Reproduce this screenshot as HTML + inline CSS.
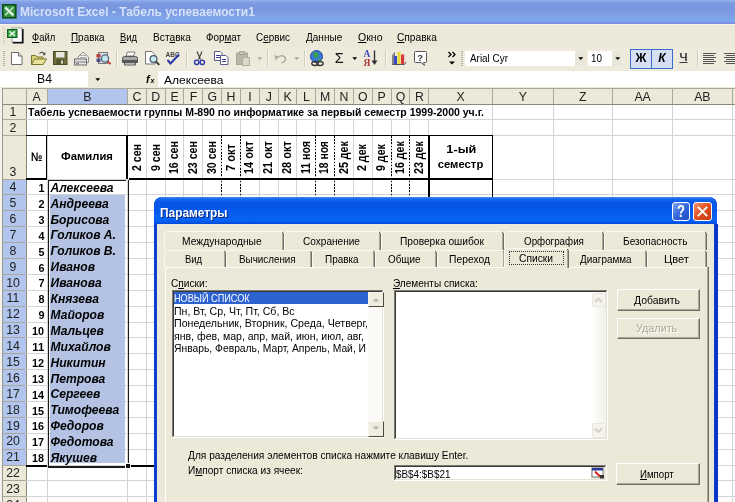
<!DOCTYPE html>
<html><head><meta charset="utf-8"><title>Excel</title><style>html,body{margin:0;padding:0;background:#fff;}
body{width:735px;height:502px;position:relative;overflow:hidden;font-family:"Liberation Sans",sans-serif;}
#r{position:absolute;left:0;top:0;width:735px;height:502px;overflow:hidden;will-change:transform;filter:blur(0.35px);}
#r div,#r span,#r svg{position:absolute;display:block;}
#r span{white-space:nowrap;}
#r u{text-decoration:underline;}
</style></head><body><div id="r">
<div style="left:0.00px;top:0.00px;width:735.00px;height:24.00px;background:linear-gradient(#9bb8f0 0,#85a4e8 6%,#7a97df 18%,#7a98e0 45%,#7fa3e8 70%,#80a8ec 88%,#7a90e6 96%,#7b8fe0 100%);"></div>
<svg style="left:2px;top:4px" width="14.5" height="14.5" viewBox="0 0 16 16"><rect x="0.8" y="0.8" width="14.400" height="14.400" fill="#3a9447" stroke="#0b4f18" stroke-width="1.800"/><path d="M3.500 3.800L12.500 12.500" stroke="#e4f4e4" stroke-width="2.600"/><path d="M12.500 3.500L3.500 12.500" stroke="#cfeacf" stroke-width="1.500"/></svg>
<span style="left:20.20px;top:4.78px;font-size:12.6px;line-height:15.12px;font-weight:bold;font-style:normal;color:#d6e1fa;transform:scaleX(0.9509);transform-origin:0 50%;">Microsoft Excel - Табель успеваемости1</span>
<div style="left:0.00px;top:24.00px;width:735.00px;height:23.00px;background:#ece9d8;"></div>
<div style="left:0.00px;top:24.00px;width:735.00px;height:1.00px;background:#f6f5ec;"></div>
<div style="left:2.50px;top:28.00px;width:2.00px;height:1.00px;background:#cfccba;"></div>
<div style="left:2.50px;top:30.00px;width:2.00px;height:1.00px;background:#cfccba;"></div>
<div style="left:2.50px;top:32.00px;width:2.00px;height:1.00px;background:#cfccba;"></div>
<div style="left:2.50px;top:34.00px;width:2.00px;height:1.00px;background:#cfccba;"></div>
<div style="left:2.50px;top:36.00px;width:2.00px;height:1.00px;background:#cfccba;"></div>
<div style="left:2.50px;top:38.00px;width:2.00px;height:1.00px;background:#cfccba;"></div>
<div style="left:2.50px;top:40.00px;width:2.00px;height:1.00px;background:#cfccba;"></div>
<div style="left:2.50px;top:42.00px;width:2.00px;height:1.00px;background:#cfccba;"></div>
<svg style="left:6px;top:27px" width="19" height="17" viewBox="0 0 19 17"><rect x="6" y="1" width="10" height="14" fill="#fff" stroke="#8a8a8a" stroke-width="0.800"/><path d="M16.800 2v13.800h-10" stroke="#111" stroke-width="1.600" fill="none"/><rect x="1.500" y="2.500" width="9.500" height="8" fill="#35a045" stroke="#14601e"/><path d="M3.500 4.300l5.500 4.500M9 4.300l-5.500 4.500" stroke="#e2f6e2" stroke-width="1.500"/></svg>
<span style="left:31.70px;top:30.50px;font-size:10.7px;line-height:12.84px;font-weight:normal;font-style:normal;color:#000;transform:scaleX(0.8857);transform-origin:0 50%;"><u>Ф</u>айл</span>
<span style="left:71.00px;top:30.50px;font-size:10.7px;line-height:12.84px;font-weight:normal;font-style:normal;color:#000;transform:scaleX(0.9268);transform-origin:0 50%;"><u>П</u>равка</span>
<span style="left:120.00px;top:30.50px;font-size:10.7px;line-height:12.84px;font-weight:normal;font-style:normal;color:#000;transform:scaleX(0.8782);transform-origin:0 50%;"><u>В</u>ид</span>
<span style="left:152.50px;top:30.50px;font-size:10.7px;line-height:12.84px;font-weight:normal;font-style:normal;color:#000;transform:scaleX(0.9555);transform-origin:0 50%;">Вст<u>а</u>вка</span>
<span style="left:206.00px;top:30.50px;font-size:10.7px;line-height:12.84px;font-weight:normal;font-style:normal;color:#000;transform:scaleX(0.9208);transform-origin:0 50%;">Фор<u>м</u>ат</span>
<span style="left:256.00px;top:30.50px;font-size:10.7px;line-height:12.84px;font-weight:normal;font-style:normal;color:#000;transform:scaleX(0.9279);transform-origin:0 50%;">С<u>е</u>рвис</span>
<span style="left:305.75px;top:30.50px;font-size:10.7px;line-height:12.84px;font-weight:normal;font-style:normal;color:#000;transform:scaleX(0.9377);transform-origin:0 50%;"><u>Д</u>анные</span>
<span style="left:357.50px;top:30.50px;font-size:10.7px;line-height:12.84px;font-weight:normal;font-style:normal;color:#000;transform:scaleX(0.9854);transform-origin:0 50%;"><u>О</u>кно</span>
<span style="left:397.00px;top:30.50px;font-size:10.7px;line-height:12.84px;font-weight:normal;font-style:normal;color:#000;transform:scaleX(0.9530);transform-origin:0 50%;"><u>С</u>правка</span>
<div style="left:0.00px;top:47.00px;width:735.00px;height:23.00px;background:#eeebdc;"></div>
<div style="left:3.00px;top:51.00px;width:2.00px;height:1.00px;background:#b5b2a0;"></div>
<div style="left:3.00px;top:53.00px;width:2.00px;height:1.00px;background:#b5b2a0;"></div>
<div style="left:3.00px;top:55.00px;width:2.00px;height:1.00px;background:#b5b2a0;"></div>
<div style="left:3.00px;top:57.00px;width:2.00px;height:1.00px;background:#b5b2a0;"></div>
<div style="left:3.00px;top:59.00px;width:2.00px;height:1.00px;background:#b5b2a0;"></div>
<div style="left:3.00px;top:61.00px;width:2.00px;height:1.00px;background:#b5b2a0;"></div>
<div style="left:3.00px;top:63.00px;width:2.00px;height:1.00px;background:#b5b2a0;"></div>
<div style="left:3.00px;top:65.00px;width:2.00px;height:1.00px;background:#b5b2a0;"></div>
<div style="left:461.00px;top:51.00px;width:2.00px;height:1.00px;background:#b5b2a0;"></div>
<div style="left:461.00px;top:53.00px;width:2.00px;height:1.00px;background:#b5b2a0;"></div>
<div style="left:461.00px;top:55.00px;width:2.00px;height:1.00px;background:#b5b2a0;"></div>
<div style="left:461.00px;top:57.00px;width:2.00px;height:1.00px;background:#b5b2a0;"></div>
<div style="left:461.00px;top:59.00px;width:2.00px;height:1.00px;background:#b5b2a0;"></div>
<div style="left:461.00px;top:61.00px;width:2.00px;height:1.00px;background:#b5b2a0;"></div>
<div style="left:461.00px;top:63.00px;width:2.00px;height:1.00px;background:#b5b2a0;"></div>
<div style="left:461.00px;top:65.00px;width:2.00px;height:1.00px;background:#b5b2a0;"></div>
<div style="left:186.00px;top:50.00px;width:1.00px;height:17.00px;background:#d0cdbc;"></div>
<div style="left:187.00px;top:50.00px;width:1.00px;height:17.00px;background:#f9f8f2;"></div>
<div style="left:267.00px;top:50.00px;width:1.00px;height:17.00px;background:#d0cdbc;"></div>
<div style="left:268.00px;top:50.00px;width:1.00px;height:17.00px;background:#f9f8f2;"></div>
<div style="left:304.00px;top:50.00px;width:1.00px;height:17.00px;background:#d0cdbc;"></div>
<div style="left:305.00px;top:50.00px;width:1.00px;height:17.00px;background:#f9f8f2;"></div>
<div style="left:384.50px;top:50.00px;width:1.00px;height:17.00px;background:#d0cdbc;"></div>
<div style="left:385.50px;top:50.00px;width:1.00px;height:17.00px;background:#f9f8f2;"></div>
<div style="left:696.70px;top:50.00px;width:1.00px;height:17.00px;background:#d0cdbc;"></div>
<div style="left:697.70px;top:50.00px;width:1.00px;height:17.00px;background:#f9f8f2;"></div>
<div style="left:116.00px;top:50.00px;width:1.00px;height:17.00px;background:#d0cdbc;"></div>
<div style="left:117.00px;top:50.00px;width:1.00px;height:17.00px;background:#f9f8f2;"></div>
<svg style="left:10px;top:51px" width="14" height="15" viewBox="0 0 14 15"><path d="M1.5 1.5h7l3.5 3.5v8.5h-10.5z" fill="#fff" stroke="#6a6a6a"/><path d="M8.5 1.5v3.5h3.5" fill="#e8e8e8" stroke="#6a6a6a"/></svg>
<svg style="left:30px;top:50px" width="18" height="16" viewBox="0 0 18 16"><path d="M1.5 14.5v-9h4l1.5 1.5h6v7.5z" fill="#d9d27a" stroke="#77742c"/><path d="M1.5 14.5l3-5.5h12l-3.5 5.5z" fill="#e9e29a" stroke="#77742c"/><path d="M9.5 3.5c2-2 4.5-1.5 5 1" fill="none" stroke="#555" stroke-width="1.2"/><path d="M15.8 2.5l-1 3.2-2.4-1.6z" fill="#555"/></svg>
<svg style="left:53px;top:51px" width="15" height="15" viewBox="0 0 15 15"><rect x="0.5" y="0.5" width="13.5" height="13" fill="#6e6e3e" stroke="#4a4a22"/><rect x="3" y="1" width="8.5" height="5.5" fill="#e8e8e0"/><rect x="3.5" y="8.5" width="7.5" height="5" fill="#55552c"/><rect x="8" y="9.5" width="2" height="3.2" fill="#d8d8c8"/></svg>
<svg style="left:73px;top:50px" width="17" height="17" viewBox="0 0 17 17"><path d="M5 7l5-5 5.5 5v5.5h-10.5z" fill="#f4f4f4" stroke="#8a8a8a"/><path d="M7 5.5h6.5M7 7.5h6.5" stroke="#aaa"/><rect x="1.5" y="9" width="12" height="6" fill="#e4e4e4" stroke="#6a6a6a"/><path d="M1.5 12h12" stroke="#7a7a7a"/><rect x="3" y="13" width="3" height="1.5" fill="#888"/></svg>
<svg style="left:95px;top:50px" width="17" height="17" viewBox="0 0 17 17"><rect x="3.5" y="2.5" width="9" height="11" fill="#dcdce8" stroke="#777"/><rect x="1.500" y="4" width="4" height="3.500" fill="#b04040"/><rect x="1.5" y="8.5" width="4" height="3.5" fill="#505088"/><circle cx="10" cy="8.5" r="3.6" fill="#bfe6ee" stroke="#5a6a7a" stroke-width="1.3"/><path d="M12.600 11.2l3 3" stroke="#c03030" stroke-width="1.8"/></svg>
<svg style="left:121px;top:50px" width="18" height="17" viewBox="0 0 18 17"><path d="M5 6l1.500-4h7.500l-1.5 4z" fill="#fff" stroke="#777"/><path d="M1.500 8.500q0-2 2-2h11q2 0 2 2v4h-15z" fill="#a8a8a8" stroke="#555"/><rect x="1.5" y="10" width="15" height="2.8" fill="#555"/><path d="M3.500 12.800h11v2.200h-11z" fill="#e0e0e0" stroke="#555"/></svg>
<svg style="left:144px;top:50px" width="17" height="17" viewBox="0 0 17 17"><path d="M1.500 1.500h6.500l3 3v9.500h-9.500z" fill="#fff" stroke="#777"/><circle cx="9.5" cy="9" r="3.400" fill="#c6ecf2" stroke="#4a5a6a" stroke-width="1.3"/><path d="M12 11.600l3.300 3.300" stroke="#333" stroke-width="1.8"/></svg>
<svg style="left:164px;top:50px" width="18" height="17" viewBox="0 0 18 17"><text x="1.500" y="6.5" font-family="Liberation Sans" font-size="6.5" font-weight="bold" fill="#444">ABC</text><path d="M3.5 10l3 3.500l8.500-9" fill="none" stroke="#2a36a8" stroke-width="2"/></svg>
<svg style="left:193px;top:50px" width="13" height="17" viewBox="0 0 13 17"><path d="M4 1.500l3.500 8M9 1.500l-3.500 8" stroke="#444" stroke-width="1.200" fill="none"/><circle cx="3.700" cy="12.300" r="2.200" fill="none" stroke="#2a36a8" stroke-width="1.400"/><circle cx="9.300" cy="12.300" r="2.200" fill="none" stroke="#2a36a8" stroke-width="1.400"/></svg>
<svg style="left:213px;top:50px" width="17" height="17" viewBox="0 0 17 17"><path d="M1.500 1.500h5.500l2 2v7h-7.500z" fill="#fff" stroke="#5a5a8a"/><path d="M3 5.500h4M3 7.500h4" stroke="#3a3a9a"/><path d="M7.500 5.500h5.500l2 2v7h-7.500z" fill="#fff" stroke="#5a5a8a"/><path d="M9 9.500h4M9 11.500h4" stroke="#3a3a9a"/></svg>
<svg style="left:235px;top:50px" width="17" height="17" viewBox="0 0 17 17"><rect x="1.500" y="3" width="11" height="11.500" fill="#b9b7a6" stroke="#a9a796"/><rect x="4.500" y="1.500" width="5" height="3" fill="#c9c7b8" stroke="#a9a796"/><rect x="7.500" y="7.500" width="7" height="8" fill="#dcdacb" stroke="#b0ae9e"/></svg>
<svg style="left:256.5px;top:57.3px" width="5.5" height="3.5" viewBox="0 0 5.5 3.5"><path d="M0.300 0.3h4.900l-2.450 2.800z" fill="#aaa898"/></svg>
<svg style="left:274px;top:53.5px" width="13" height="10" viewBox="0 0 13 10"><path d="M3 4C6 0.500 11 1.200 11.500 4.800C11.700 7 10 8.500 7.500 8.600" fill="none" stroke="#b0ae9e" stroke-width="1.600"/><path d="M0.300 1.200l5 1-3.800 4.300z" fill="#b0ae9e"/></svg>
<svg style="left:293.5px;top:57.3px" width="5.5" height="3.5" viewBox="0 0 5.5 3.5"><path d="M0.300 0.3h4.900l-2.450 2.800z" fill="#aaa898"/></svg>
<svg style="left:309px;top:49px" width="17" height="18" viewBox="0 0 17 18"><circle cx="7.500" cy="7.500" r="6" fill="#3a78d8" stroke="#224a9a"/><path d="M4 4q3-2 5 0.500t-1 4-3-1.500z" fill="#3aa04a"/><path d="M9 9.500q3-0.500 3 1.500l-2 1.500z" fill="#3aa04a"/><ellipse cx="6" cy="14.500" rx="3.200" ry="2" fill="none" stroke="#333" stroke-width="1.300"/><ellipse cx="11" cy="14.500" rx="3.200" ry="2" fill="none" stroke="#333" stroke-width="1.300"/></svg>
<span style="left:334.80px;top:50.27px;font-size:14.5px;line-height:17.40px;font-weight:normal;font-style:normal;color:#111;font-family:"Liberation Serif",serif;">Σ</span>
<svg style="left:352.0px;top:57.3px" width="5.5" height="3.5" viewBox="0 0 5.5 3.5"><path d="M0.300 0.3h4.900l-2.450 2.800z" fill="#000"/></svg>
<svg style="left:363px;top:49px" width="17" height="18" viewBox="0 0 17 18"><text x="0.500" y="8" font-family="Liberation Serif" font-size="9.500" font-weight="bold" fill="#3a46b8">A</text><text x="0.5" y="16.500" font-family="Liberation Serif" font-size="9.500" font-weight="bold" fill="#a83a3a">Я</text><path d="M11.500 1.500v12" stroke="#333" stroke-width="1.400"/><path d="M8.500 11.500h6l-3 4.500z" fill="#333"/></svg>
<svg style="left:390px;top:49px" width="17" height="18" viewBox="0 0 17 18"><path d="M2.500 15.500v-9l2-3v9z" fill="#888" stroke="#555" stroke-width="0.600"/><path d="M2.500 15.500h12l1.500-2.500" fill="none" stroke="#555"/><rect x="4" y="7" width="3" height="8" fill="#3848c8"/><rect x="7.500" y="3" width="3" height="12" fill="#e8d838"/><rect x="11" y="5.500" width="3.200" height="9.500" fill="#d83a3a"/></svg>
<svg style="left:413px;top:50px" width="15" height="17" viewBox="0 0 15 17"><path d="M2.500 1.500h10q1 0 1 1v9q0 1-1 1h-2l1 3-3.500-3h-5.500q-1 0-1-1v-9q0-1 1-1z" fill="#fff" stroke="#555"/><text x="4.300" y="10.500" font-family="Liberation Sans" font-size="9.500" font-weight="bold" fill="#333">?</text></svg>
<svg style="left:447px;top:51px" width="10" height="15" viewBox="0 0 10 15"><path d="M1.500 1l2.500 2.500-2.500 2.500M5.500 1l2.500 2.500-2.500 2.500" fill="none" stroke="#000" stroke-width="1.300"/><path d="M2 10.500h6l-3 3z" fill="#000"/></svg>
<div style="left:465.00px;top:50.50px;width:110.00px;height:15.50px;background:#fff;"></div>
<span style="left:470.00px;top:52.20px;font-size:10.7px;line-height:12.84px;font-weight:normal;font-style:normal;color:#000;transform:scaleX(0.9264);transform-origin:0 50%;">Arial Cyr</span>
<div style="left:575.00px;top:50.50px;width:10.00px;height:15.50px;background:#e8e6d8;"></div>
<svg style="left:577.5px;top:57.3px" width="5.5" height="3.5" viewBox="0 0 5.5 3.5"><path d="M0.300 0.3h4.900l-2.450 2.800z" fill="#000"/></svg>
<div style="left:588.00px;top:50.50px;width:24.00px;height:15.50px;background:#fff;"></div>
<span style="left:591.00px;top:52.20px;font-size:10.7px;line-height:12.84px;font-weight:normal;font-style:normal;color:#000;transform:scaleX(0.9242);transform-origin:0 50%;">10</span>
<div style="left:612.00px;top:50.50px;width:9.00px;height:15.50px;background:#e8e6d8;"></div>
<svg style="left:615.0px;top:57.3px" width="5.5" height="3.5" viewBox="0 0 5.5 3.5"><path d="M0.300 0.3h4.900l-2.450 2.800z" fill="#000"/></svg>
<div style="left:630.00px;top:48.50px;width:22.00px;height:20.00px;background:#d6dff3;border:1px solid #3a6ccb;box-sizing:border-box;"></div>
<div style="left:651.00px;top:48.50px;width:22.00px;height:20.00px;background:#d6dff3;border:1px solid #3a6ccb;box-sizing:border-box;"></div>
<span style="left:635.58px;top:51.44px;font-size:12px;line-height:14.40px;font-weight:bold;font-style:normal;color:#000;">Ж</span>
<span style="left:658.31px;top:51.44px;font-size:12px;line-height:14.40px;font-weight:bold;font-style:italic;color:#000;">К</span>
<span style="left:679.46px;top:51.43px;font-size:11.5px;line-height:13.80px;font-weight:bold;font-style:normal;color:#3a3a3a;text-decoration:underline;">Ч</span>
<div style="left:703.00px;top:53.00px;width:12.80px;height:1.20px;background:#555;"></div>
<div style="left:703.00px;top:55.05px;width:10.50px;height:1.20px;background:#555;"></div>
<div style="left:703.00px;top:57.10px;width:12.80px;height:1.20px;background:#555;"></div>
<div style="left:703.00px;top:59.15px;width:10.50px;height:1.20px;background:#555;"></div>
<div style="left:703.00px;top:61.20px;width:12.80px;height:1.20px;background:#555;"></div>
<div style="left:703.00px;top:63.25px;width:10.50px;height:1.20px;background:#555;"></div>
<div style="left:724.00px;top:53.00px;width:12.80px;height:1.20px;background:#555;"></div>
<div style="left:725.50px;top:55.05px;width:9.80px;height:1.20px;background:#555;"></div>
<div style="left:724.00px;top:57.10px;width:12.80px;height:1.20px;background:#555;"></div>
<div style="left:725.50px;top:59.15px;width:9.80px;height:1.20px;background:#555;"></div>
<div style="left:724.00px;top:61.20px;width:12.80px;height:1.20px;background:#555;"></div>
<div style="left:725.50px;top:63.25px;width:9.80px;height:1.20px;background:#555;"></div>
<div style="left:0.00px;top:70.00px;width:735.00px;height:17.50px;background:#ece9d8;"></div>
<div style="left:0.00px;top:71.00px;width:88.00px;height:16.00px;background:#fff;"></div>
<span style="left:37.04px;top:72.32px;font-size:12.2px;line-height:14.64px;font-weight:normal;font-style:normal;color:#000;">B4</span>
<svg style="left:94.5px;top:78.3px" width="5.5" height="3.5" viewBox="0 0 5.5 3.5"><path d="M0.300 0.3h4.900l-2.450 2.800z" fill="#000"/></svg>
<span style="left:146.00px;top:72.53px;font-size:11px;line-height:13.20px;font-weight:bold;font-style:italic;color:#000;font-family:"Liberation Serif",serif;">f</span>
<span style="left:150.50px;top:76.88px;font-size:7px;line-height:8.40px;font-weight:bold;font-style:italic;color:#000;font-family:"Liberation Serif",serif;">x</span>
<div style="left:157.50px;top:71.00px;width:577.50px;height:16.00px;background:#fff;"></div>
<span style="left:164.00px;top:72.67px;font-size:11.6px;line-height:13.92px;font-weight:normal;font-style:normal;color:#000;transform:scaleX(1.0375);transform-origin:0 50%;">Алексеева</span>
<div style="left:0.00px;top:87.50px;width:735.00px;height:414.50px;background:#fff;"></div>
<div style="left:0.00px;top:87.50px;width:735.00px;height:17.00px;background:#ece9d8;"></div>
<div style="left:47.00px;top:87.50px;width:80.50px;height:17.00px;background:#b1c5ee;"></div>
<div style="left:0.00px;top:87.50px;width:735.00px;height:1.00px;background:#aca899;"></div>
<div style="left:0.00px;top:104.00px;width:735.00px;height:1.00px;background:#8a8878;"></div>
<div style="left:25.50px;top:89.00px;width:1.00px;height:15.00px;background:#aca899;"></div>
<div style="left:46.50px;top:89.00px;width:1.00px;height:15.00px;background:#aca899;"></div>
<div style="left:127.00px;top:89.00px;width:1.00px;height:15.00px;background:#aca899;"></div>
<div style="left:145.83px;top:89.00px;width:1.00px;height:15.00px;background:#aca899;"></div>
<div style="left:164.66px;top:89.00px;width:1.00px;height:15.00px;background:#aca899;"></div>
<div style="left:183.49px;top:89.00px;width:1.00px;height:15.00px;background:#aca899;"></div>
<div style="left:202.32px;top:89.00px;width:1.00px;height:15.00px;background:#aca899;"></div>
<div style="left:221.15px;top:89.00px;width:1.00px;height:15.00px;background:#aca899;"></div>
<div style="left:239.98px;top:89.00px;width:1.00px;height:15.00px;background:#aca899;"></div>
<div style="left:258.81px;top:89.00px;width:1.00px;height:15.00px;background:#aca899;"></div>
<div style="left:277.64px;top:89.00px;width:1.00px;height:15.00px;background:#aca899;"></div>
<div style="left:296.47px;top:89.00px;width:1.00px;height:15.00px;background:#aca899;"></div>
<div style="left:315.30px;top:89.00px;width:1.00px;height:15.00px;background:#aca899;"></div>
<div style="left:334.13px;top:89.00px;width:1.00px;height:15.00px;background:#aca899;"></div>
<div style="left:352.96px;top:89.00px;width:1.00px;height:15.00px;background:#aca899;"></div>
<div style="left:371.79px;top:89.00px;width:1.00px;height:15.00px;background:#aca899;"></div>
<div style="left:390.62px;top:89.00px;width:1.00px;height:15.00px;background:#aca899;"></div>
<div style="left:409.45px;top:89.00px;width:1.00px;height:15.00px;background:#aca899;"></div>
<div style="left:428.30px;top:89.00px;width:1.00px;height:15.00px;background:#aca899;"></div>
<div style="left:492.00px;top:89.00px;width:1.00px;height:15.00px;background:#aca899;"></div>
<div style="left:552.50px;top:89.00px;width:1.00px;height:15.00px;background:#aca899;"></div>
<div style="left:612.00px;top:89.00px;width:1.00px;height:15.00px;background:#aca899;"></div>
<div style="left:672.20px;top:89.00px;width:1.00px;height:15.00px;background:#aca899;"></div>
<div style="left:731.50px;top:89.00px;width:1.00px;height:15.00px;background:#aca899;"></div>
<span style="left:32.40px;top:90.06px;font-size:12.3px;line-height:14.76px;font-weight:normal;font-style:normal;color:#222;">A</span>
<span style="left:83.15px;top:90.06px;font-size:12.3px;line-height:14.76px;font-weight:normal;font-style:normal;color:#222;">B</span>
<span style="left:132.47px;top:90.06px;font-size:12.3px;line-height:14.76px;font-weight:normal;font-style:normal;color:#222;">C</span>
<span style="left:151.30px;top:90.06px;font-size:12.3px;line-height:14.76px;font-weight:normal;font-style:normal;color:#222;">D</span>
<span style="left:170.47px;top:90.06px;font-size:12.3px;line-height:14.76px;font-weight:normal;font-style:normal;color:#222;">E</span>
<span style="left:189.65px;top:90.06px;font-size:12.3px;line-height:14.76px;font-weight:normal;font-style:normal;color:#222;">F</span>
<span style="left:207.45px;top:90.06px;font-size:12.3px;line-height:14.76px;font-weight:normal;font-style:normal;color:#222;">G</span>
<span style="left:226.62px;top:90.06px;font-size:12.3px;line-height:14.76px;font-weight:normal;font-style:normal;color:#222;">H</span>
<span style="left:248.19px;top:90.06px;font-size:12.3px;line-height:14.76px;font-weight:normal;font-style:normal;color:#222;">I</span>
<span style="left:265.65px;top:90.06px;font-size:12.3px;line-height:14.76px;font-weight:normal;font-style:normal;color:#222;">J</span>
<span style="left:283.45px;top:90.06px;font-size:12.3px;line-height:14.76px;font-weight:normal;font-style:normal;color:#222;">K</span>
<span style="left:302.96px;top:90.06px;font-size:12.3px;line-height:14.76px;font-weight:normal;font-style:normal;color:#222;">L</span>
<span style="left:320.09px;top:90.06px;font-size:12.3px;line-height:14.76px;font-weight:normal;font-style:normal;color:#222;">M</span>
<span style="left:339.60px;top:90.06px;font-size:12.3px;line-height:14.76px;font-weight:normal;font-style:normal;color:#222;">N</span>
<span style="left:358.09px;top:90.06px;font-size:12.3px;line-height:14.76px;font-weight:normal;font-style:normal;color:#222;">O</span>
<span style="left:377.60px;top:90.06px;font-size:12.3px;line-height:14.76px;font-weight:normal;font-style:normal;color:#222;">P</span>
<span style="left:395.75px;top:90.06px;font-size:12.3px;line-height:14.76px;font-weight:normal;font-style:normal;color:#222;">Q</span>
<span style="left:414.93px;top:90.06px;font-size:12.3px;line-height:14.76px;font-weight:normal;font-style:normal;color:#222;">R</span>
<span style="left:456.55px;top:90.06px;font-size:12.3px;line-height:14.76px;font-weight:normal;font-style:normal;color:#222;">X</span>
<span style="left:518.65px;top:90.06px;font-size:12.3px;line-height:14.76px;font-weight:normal;font-style:normal;color:#222;">Y</span>
<span style="left:578.99px;top:90.06px;font-size:12.3px;line-height:14.76px;font-weight:normal;font-style:normal;color:#222;">Z</span>
<span style="left:634.40px;top:90.06px;font-size:12.3px;line-height:14.76px;font-weight:normal;font-style:normal;color:#222;">AA</span>
<span style="left:694.15px;top:90.06px;font-size:12.3px;line-height:14.76px;font-weight:normal;font-style:normal;color:#222;">AB</span>
<div style="left:0.00px;top:104.50px;width:26.00px;height:397.50px;background:#ece9d8;"></div>
<div style="left:0.00px;top:179.00px;width:26.00px;height:286.02px;background:#b1c5ee;"></div>
<div style="left:25.50px;top:104.50px;width:1.00px;height:397.50px;background:#8a8878;"></div>
<div style="left:0.00px;top:119.00px;width:26.00px;height:1.00px;background:#aca899;"></div>
<span style="left:9.58px;top:105.26px;font-size:12.3px;line-height:14.76px;font-weight:normal;font-style:normal;color:#222;">1</span>
<div style="left:0.00px;top:134.50px;width:26.00px;height:1.00px;background:#aca899;"></div>
<span style="left:9.58px;top:120.51px;font-size:12.3px;line-height:14.76px;font-weight:normal;font-style:normal;color:#222;">2</span>
<div style="left:0.00px;top:178.50px;width:26.00px;height:1.00px;background:#aca899;"></div>
<span style="left:9.58px;top:165.26px;font-size:12.3px;line-height:14.76px;font-weight:normal;font-style:normal;color:#222;">3</span>
<div style="left:0.00px;top:194.39px;width:26.00px;height:1.00px;background:#aca899;"></div>
<span style="left:9.58px;top:180.21px;font-size:12.3px;line-height:14.76px;font-weight:normal;font-style:normal;color:#222;">4</span>
<div style="left:0.00px;top:210.28px;width:26.00px;height:1.00px;background:#aca899;"></div>
<span style="left:9.58px;top:196.10px;font-size:12.3px;line-height:14.76px;font-weight:normal;font-style:normal;color:#222;">5</span>
<div style="left:0.00px;top:226.17px;width:26.00px;height:1.00px;background:#aca899;"></div>
<span style="left:9.58px;top:211.99px;font-size:12.3px;line-height:14.76px;font-weight:normal;font-style:normal;color:#222;">6</span>
<div style="left:0.00px;top:242.06px;width:26.00px;height:1.00px;background:#aca899;"></div>
<span style="left:9.58px;top:227.88px;font-size:12.3px;line-height:14.76px;font-weight:normal;font-style:normal;color:#222;">7</span>
<div style="left:0.00px;top:257.95px;width:26.00px;height:1.00px;background:#aca899;"></div>
<span style="left:9.58px;top:243.77px;font-size:12.3px;line-height:14.76px;font-weight:normal;font-style:normal;color:#222;">8</span>
<div style="left:0.00px;top:273.84px;width:26.00px;height:1.00px;background:#aca899;"></div>
<span style="left:9.58px;top:259.66px;font-size:12.3px;line-height:14.76px;font-weight:normal;font-style:normal;color:#222;">9</span>
<div style="left:0.00px;top:289.73px;width:26.00px;height:1.00px;background:#aca899;"></div>
<span style="left:6.16px;top:275.55px;font-size:12.3px;line-height:14.76px;font-weight:normal;font-style:normal;color:#222;">10</span>
<div style="left:0.00px;top:305.62px;width:26.00px;height:1.00px;background:#aca899;"></div>
<span style="left:6.62px;top:291.44px;font-size:12.3px;line-height:14.76px;font-weight:normal;font-style:normal;color:#222;">11</span>
<div style="left:0.00px;top:321.51px;width:26.00px;height:1.00px;background:#aca899;"></div>
<span style="left:6.16px;top:307.33px;font-size:12.3px;line-height:14.76px;font-weight:normal;font-style:normal;color:#222;">12</span>
<div style="left:0.00px;top:337.40px;width:26.00px;height:1.00px;background:#aca899;"></div>
<span style="left:6.16px;top:323.22px;font-size:12.3px;line-height:14.76px;font-weight:normal;font-style:normal;color:#222;">13</span>
<div style="left:0.00px;top:353.29px;width:26.00px;height:1.00px;background:#aca899;"></div>
<span style="left:6.16px;top:339.11px;font-size:12.3px;line-height:14.76px;font-weight:normal;font-style:normal;color:#222;">14</span>
<div style="left:0.00px;top:369.18px;width:26.00px;height:1.00px;background:#aca899;"></div>
<span style="left:6.16px;top:355.00px;font-size:12.3px;line-height:14.76px;font-weight:normal;font-style:normal;color:#222;">15</span>
<div style="left:0.00px;top:385.07px;width:26.00px;height:1.00px;background:#aca899;"></div>
<span style="left:6.16px;top:370.89px;font-size:12.3px;line-height:14.76px;font-weight:normal;font-style:normal;color:#222;">16</span>
<div style="left:0.00px;top:400.96px;width:26.00px;height:1.00px;background:#aca899;"></div>
<span style="left:6.16px;top:386.78px;font-size:12.3px;line-height:14.76px;font-weight:normal;font-style:normal;color:#222;">17</span>
<div style="left:0.00px;top:416.85px;width:26.00px;height:1.00px;background:#aca899;"></div>
<span style="left:6.16px;top:402.67px;font-size:12.3px;line-height:14.76px;font-weight:normal;font-style:normal;color:#222;">18</span>
<div style="left:0.00px;top:432.74px;width:26.00px;height:1.00px;background:#aca899;"></div>
<span style="left:6.16px;top:418.56px;font-size:12.3px;line-height:14.76px;font-weight:normal;font-style:normal;color:#222;">19</span>
<div style="left:0.00px;top:448.63px;width:26.00px;height:1.00px;background:#aca899;"></div>
<span style="left:6.16px;top:434.45px;font-size:12.3px;line-height:14.76px;font-weight:normal;font-style:normal;color:#222;">20</span>
<div style="left:0.00px;top:464.52px;width:26.00px;height:1.00px;background:#aca899;"></div>
<span style="left:6.16px;top:450.34px;font-size:12.3px;line-height:14.76px;font-weight:normal;font-style:normal;color:#222;">21</span>
<div style="left:0.00px;top:480.41px;width:26.00px;height:1.00px;background:#aca899;"></div>
<span style="left:6.16px;top:466.23px;font-size:12.3px;line-height:14.76px;font-weight:normal;font-style:normal;color:#222;">22</span>
<div style="left:0.00px;top:496.30px;width:26.00px;height:1.00px;background:#aca899;"></div>
<span style="left:6.16px;top:482.12px;font-size:12.3px;line-height:14.76px;font-weight:normal;font-style:normal;color:#222;">23</span>
<div style="left:0.00px;top:512.19px;width:26.00px;height:1.00px;background:#aca899;"></div>
<span style="left:6.16px;top:498.01px;font-size:12.3px;line-height:14.76px;font-weight:normal;font-style:normal;color:#222;">24</span>
<div style="left:0.00px;top:87.50px;width:1.50px;height:414.50px;background:#f4f3ee;"></div>
<div style="left:1.50px;top:87.50px;width:0.80px;height:414.50px;background:#9a9888;"></div>
<div style="left:46.50px;top:104.50px;width:1.00px;height:397.50px;background:#d4d4d4;"></div>
<div style="left:127.00px;top:104.50px;width:1.00px;height:397.50px;background:#d4d4d4;"></div>
<div style="left:145.83px;top:104.50px;width:1.00px;height:397.50px;background:#d4d4d4;"></div>
<div style="left:164.66px;top:104.50px;width:1.00px;height:397.50px;background:#d4d4d4;"></div>
<div style="left:183.49px;top:104.50px;width:1.00px;height:397.50px;background:#d4d4d4;"></div>
<div style="left:202.32px;top:104.50px;width:1.00px;height:397.50px;background:#d4d4d4;"></div>
<div style="left:221.15px;top:104.50px;width:1.00px;height:397.50px;background:#d4d4d4;"></div>
<div style="left:239.98px;top:104.50px;width:1.00px;height:397.50px;background:#d4d4d4;"></div>
<div style="left:258.81px;top:104.50px;width:1.00px;height:397.50px;background:#d4d4d4;"></div>
<div style="left:277.64px;top:104.50px;width:1.00px;height:397.50px;background:#d4d4d4;"></div>
<div style="left:296.47px;top:104.50px;width:1.00px;height:397.50px;background:#d4d4d4;"></div>
<div style="left:315.30px;top:104.50px;width:1.00px;height:397.50px;background:#d4d4d4;"></div>
<div style="left:334.13px;top:104.50px;width:1.00px;height:397.50px;background:#d4d4d4;"></div>
<div style="left:352.96px;top:104.50px;width:1.00px;height:397.50px;background:#d4d4d4;"></div>
<div style="left:371.79px;top:104.50px;width:1.00px;height:397.50px;background:#d4d4d4;"></div>
<div style="left:390.62px;top:104.50px;width:1.00px;height:397.50px;background:#d4d4d4;"></div>
<div style="left:409.45px;top:104.50px;width:1.00px;height:397.50px;background:#d4d4d4;"></div>
<div style="left:428.30px;top:104.50px;width:1.00px;height:397.50px;background:#d4d4d4;"></div>
<div style="left:492.00px;top:104.50px;width:1.00px;height:397.50px;background:#d4d4d4;"></div>
<div style="left:552.50px;top:104.50px;width:1.00px;height:397.50px;background:#d4d4d4;"></div>
<div style="left:612.00px;top:104.50px;width:1.00px;height:397.50px;background:#d4d4d4;"></div>
<div style="left:672.20px;top:104.50px;width:1.00px;height:397.50px;background:#d4d4d4;"></div>
<div style="left:731.50px;top:104.50px;width:1.00px;height:397.50px;background:#d4d4d4;"></div>
<div style="left:26.00px;top:119.00px;width:709.00px;height:1.00px;background:#d4d4d4;"></div>
<div style="left:26.00px;top:134.50px;width:709.00px;height:1.00px;background:#d4d4d4;"></div>
<div style="left:26.00px;top:178.50px;width:709.00px;height:1.00px;background:#d4d4d4;"></div>
<div style="left:26.00px;top:194.39px;width:709.00px;height:1.00px;background:#d4d4d4;"></div>
<div style="left:26.00px;top:210.28px;width:709.00px;height:1.00px;background:#d4d4d4;"></div>
<div style="left:26.00px;top:226.17px;width:709.00px;height:1.00px;background:#d4d4d4;"></div>
<div style="left:26.00px;top:242.06px;width:709.00px;height:1.00px;background:#d4d4d4;"></div>
<div style="left:26.00px;top:257.95px;width:709.00px;height:1.00px;background:#d4d4d4;"></div>
<div style="left:26.00px;top:273.84px;width:709.00px;height:1.00px;background:#d4d4d4;"></div>
<div style="left:26.00px;top:289.73px;width:709.00px;height:1.00px;background:#d4d4d4;"></div>
<div style="left:26.00px;top:305.62px;width:709.00px;height:1.00px;background:#d4d4d4;"></div>
<div style="left:26.00px;top:321.51px;width:709.00px;height:1.00px;background:#d4d4d4;"></div>
<div style="left:26.00px;top:337.40px;width:709.00px;height:1.00px;background:#d4d4d4;"></div>
<div style="left:26.00px;top:353.29px;width:709.00px;height:1.00px;background:#d4d4d4;"></div>
<div style="left:26.00px;top:369.18px;width:709.00px;height:1.00px;background:#d4d4d4;"></div>
<div style="left:26.00px;top:385.07px;width:709.00px;height:1.00px;background:#d4d4d4;"></div>
<div style="left:26.00px;top:400.96px;width:709.00px;height:1.00px;background:#d4d4d4;"></div>
<div style="left:26.00px;top:416.85px;width:709.00px;height:1.00px;background:#d4d4d4;"></div>
<div style="left:26.00px;top:432.74px;width:709.00px;height:1.00px;background:#d4d4d4;"></div>
<div style="left:26.00px;top:448.63px;width:709.00px;height:1.00px;background:#d4d4d4;"></div>
<div style="left:26.00px;top:464.52px;width:709.00px;height:1.00px;background:#d4d4d4;"></div>
<div style="left:26.00px;top:480.41px;width:709.00px;height:1.00px;background:#d4d4d4;"></div>
<div style="left:26.00px;top:496.30px;width:709.00px;height:1.00px;background:#d4d4d4;"></div>
<div style="left:26.00px;top:512.19px;width:709.00px;height:1.00px;background:#d4d4d4;"></div>
<div style="left:27.00px;top:105.00px;width:458.00px;height:14.00px;background:#fff;"></div>
<span style="left:28.00px;top:105.62px;font-size:10.5px;line-height:12.60px;font-weight:bold;font-style:normal;color:#000;">Табель успеваемости группы М-890 по информатике за первый семестр 1999-2000 уч.г.</span>
<div style="left:49.90px;top:195.09px;width:75.00px;height:267.93px;background:#b4c3e4;"></div>
<div style="left:26.00px;top:134.60px;width:466.80px;height:1.70px;background:#000;"></div>
<div style="left:26.00px;top:178.10px;width:20.50px;height:1.70px;background:#000;"></div>
<div style="left:128.60px;top:178.40px;width:364.20px;height:1.70px;background:#000;"></div>
<div style="left:45.90px;top:135.00px;width:1.60px;height:43.00px;background:#000;"></div>
<div style="left:126.30px;top:135.00px;width:1.50px;height:43.50px;background:#000;"></div>
<div style="left:428.10px;top:135.00px;width:1.60px;height:331.52px;background:#000;"></div>
<div style="left:491.70px;top:135.00px;width:1.60px;height:331.52px;background:#000;"></div>
<div style="left:26.00px;top:465.12px;width:20.50px;height:1.70px;background:#000;"></div>
<div style="left:130.50px;top:465.12px;width:362.30px;height:1.70px;background:#000;"></div>
<div style="left:47.70px;top:180.00px;width:1.20px;height:287.42px;background:#1a1a1a;"></div>
<div style="left:128.00px;top:180.00px;width:1.20px;height:284.02px;background:#1a1a1a;"></div>
<div style="left:47.70px;top:180.00px;width:78.60px;height:1.20px;background:#1a1a1a;"></div>
<div style="left:47.70px;top:466.32px;width:78.00px;height:1.20px;background:#1a1a1a;"></div>
<div style="left:221.15px;top:136px;width:1px;height:329.02px;background:repeating-linear-gradient(#000 0,#000 1.6px,transparent 1.6px,transparent 3.2px)"></div>
<div style="left:239.98px;top:136px;width:1px;height:329.02px;background:repeating-linear-gradient(#000 0,#000 1.6px,transparent 1.6px,transparent 3.2px)"></div>
<div style="left:315.30px;top:136px;width:1px;height:329.02px;background:repeating-linear-gradient(#000 0,#000 1.6px,transparent 1.6px,transparent 3.2px)"></div>
<div style="left:334.13px;top:136px;width:1px;height:329.02px;background:repeating-linear-gradient(#000 0,#000 1.6px,transparent 1.6px,transparent 3.2px)"></div>
<div style="left:390.62px;top:136px;width:1px;height:329.02px;background:repeating-linear-gradient(#000 0,#000 1.6px,transparent 1.6px,transparent 3.2px)"></div>
<div style="left:409.45px;top:136px;width:1px;height:329.02px;background:repeating-linear-gradient(#000 0,#000 1.6px,transparent 1.6px,transparent 3.2px)"></div>
<span style="left:29.90px;top:150.12px;font-size:12.2px;line-height:14.64px;font-weight:bold;font-style:normal;color:#000;transform:scaleX(0.8382);transform-origin:50% 50%;">№</span>
<span style="left:61.02px;top:150.35px;font-size:11.3px;line-height:13.56px;font-weight:bold;font-style:normal;color:#000;">Фамилия</span>
<span style="left:120.85px;top:150.44px;font-size:12.6px;line-height:15.12px;font-weight:bold;transform:rotate(-90deg) scaleX(0.8402);transform-origin:50% 50%;">2 сен</span>
<span style="left:139.68px;top:150.44px;font-size:12.6px;line-height:15.12px;font-weight:bold;transform:rotate(-90deg) scaleX(0.8402);transform-origin:50% 50%;">9 сен</span>
<span style="left:155.00px;top:150.44px;font-size:12.6px;line-height:15.12px;font-weight:bold;transform:rotate(-90deg) scaleX(0.8431);transform-origin:50% 50%;">16 сен</span>
<span style="left:173.83px;top:150.44px;font-size:12.6px;line-height:15.12px;font-weight:bold;transform:rotate(-90deg) scaleX(0.8431);transform-origin:50% 50%;">23 сен</span>
<span style="left:192.66px;top:150.44px;font-size:12.6px;line-height:15.12px;font-weight:bold;transform:rotate(-90deg) scaleX(0.8431);transform-origin:50% 50%;">30 сен</span>
<span style="left:215.72px;top:150.44px;font-size:12.6px;line-height:15.12px;font-weight:bold;transform:rotate(-90deg) scaleX(0.8800);transform-origin:50% 50%;">7 окт</span>
<span style="left:231.05px;top:150.44px;font-size:12.6px;line-height:15.12px;font-weight:bold;transform:rotate(-90deg) scaleX(0.8756);transform-origin:50% 50%;">14 окт</span>
<span style="left:249.88px;top:150.44px;font-size:12.6px;line-height:15.12px;font-weight:bold;transform:rotate(-90deg) scaleX(0.8756);transform-origin:50% 50%;">21 окт</span>
<span style="left:268.71px;top:150.44px;font-size:12.6px;line-height:15.12px;font-weight:bold;transform:rotate(-90deg) scaleX(0.8756);transform-origin:50% 50%;">28 окт</span>
<span style="left:286.73px;top:150.44px;font-size:12.6px;line-height:15.12px;font-weight:bold;transform:rotate(-90deg) scaleX(0.8394);transform-origin:50% 50%;">11 ноя</span>
<span style="left:305.21px;top:150.44px;font-size:12.6px;line-height:15.12px;font-weight:bold;transform:rotate(-90deg) scaleX(0.8248);transform-origin:50% 50%;">18 ноя</span>
<span style="left:324.63px;top:150.44px;font-size:12.6px;line-height:15.12px;font-weight:bold;transform:rotate(-90deg) scaleX(0.8499);transform-origin:50% 50%;">25 дек</span>
<span style="left:346.97px;top:150.44px;font-size:12.6px;line-height:15.12px;font-weight:bold;transform:rotate(-90deg) scaleX(0.8485);transform-origin:50% 50%;">2 дек</span>
<span style="left:365.80px;top:150.44px;font-size:12.6px;line-height:15.12px;font-weight:bold;transform:rotate(-90deg) scaleX(0.8485);transform-origin:50% 50%;">9 дек</span>
<span style="left:381.12px;top:150.44px;font-size:12.6px;line-height:15.12px;font-weight:bold;transform:rotate(-90deg) scaleX(0.8499);transform-origin:50% 50%;">16 дек</span>
<span style="left:399.96px;top:150.44px;font-size:12.6px;line-height:15.12px;font-weight:bold;transform:rotate(-90deg) scaleX(0.8499);transform-origin:50% 50%;">23 дек</span>
<span style="left:448.18px;top:143.15px;font-size:11.3px;line-height:13.56px;font-weight:bold;font-style:normal;color:#000;transform:scaleX(1.1259);transform-origin:50% 50%;">1-ый</span>
<span style="left:437.68px;top:157.95px;font-size:11.3px;line-height:13.56px;font-weight:bold;font-style:normal;color:#000;">семестр</span>
<span style="left:37.85px;top:181.12px;font-size:11.6px;line-height:13.92px;font-weight:bold;font-style:normal;color:#000;transform:scaleX(0.9300);transform-origin:100% 50%;">1</span>
<span style="left:50.50px;top:180.82px;font-size:12.1px;line-height:14.52px;font-weight:bold;font-style:italic;color:#000;">Алексеева</span>
<span style="left:37.85px;top:197.01px;font-size:11.6px;line-height:13.92px;font-weight:bold;font-style:normal;color:#000;transform:scaleX(0.9300);transform-origin:100% 50%;">2</span>
<span style="left:50.50px;top:196.71px;font-size:12.1px;line-height:14.52px;font-weight:bold;font-style:italic;color:#000;">Андреева</span>
<span style="left:37.85px;top:212.90px;font-size:11.6px;line-height:13.92px;font-weight:bold;font-style:normal;color:#000;transform:scaleX(0.9300);transform-origin:100% 50%;">3</span>
<span style="left:50.50px;top:212.60px;font-size:12.1px;line-height:14.52px;font-weight:bold;font-style:italic;color:#000;">Борисова</span>
<span style="left:37.85px;top:228.79px;font-size:11.6px;line-height:13.92px;font-weight:bold;font-style:normal;color:#000;transform:scaleX(0.9300);transform-origin:100% 50%;">4</span>
<span style="left:50.50px;top:228.49px;font-size:12.1px;line-height:14.52px;font-weight:bold;font-style:italic;color:#000;">Голиков А.</span>
<span style="left:37.85px;top:244.68px;font-size:11.6px;line-height:13.92px;font-weight:bold;font-style:normal;color:#000;transform:scaleX(0.9300);transform-origin:100% 50%;">5</span>
<span style="left:50.50px;top:244.38px;font-size:12.1px;line-height:14.52px;font-weight:bold;font-style:italic;color:#000;">Голиков В.</span>
<span style="left:37.85px;top:260.57px;font-size:11.6px;line-height:13.92px;font-weight:bold;font-style:normal;color:#000;transform:scaleX(0.9300);transform-origin:100% 50%;">6</span>
<span style="left:50.50px;top:260.27px;font-size:12.1px;line-height:14.52px;font-weight:bold;font-style:italic;color:#000;">Иванов</span>
<span style="left:37.85px;top:276.46px;font-size:11.6px;line-height:13.92px;font-weight:bold;font-style:normal;color:#000;transform:scaleX(0.9300);transform-origin:100% 50%;">7</span>
<span style="left:50.50px;top:276.16px;font-size:12.1px;line-height:14.52px;font-weight:bold;font-style:italic;color:#000;">Иванова</span>
<span style="left:37.85px;top:292.35px;font-size:11.6px;line-height:13.92px;font-weight:bold;font-style:normal;color:#000;transform:scaleX(0.9300);transform-origin:100% 50%;">8</span>
<span style="left:50.50px;top:292.05px;font-size:12.1px;line-height:14.52px;font-weight:bold;font-style:italic;color:#000;">Князева</span>
<span style="left:37.85px;top:308.24px;font-size:11.6px;line-height:13.92px;font-weight:bold;font-style:normal;color:#000;transform:scaleX(0.9300);transform-origin:100% 50%;">9</span>
<span style="left:50.50px;top:307.94px;font-size:12.1px;line-height:14.52px;font-weight:bold;font-style:italic;color:#000;">Майоров</span>
<span style="left:31.40px;top:324.13px;font-size:11.6px;line-height:13.92px;font-weight:bold;font-style:normal;color:#000;transform:scaleX(0.9300);transform-origin:100% 50%;">10</span>
<span style="left:50.50px;top:323.83px;font-size:12.1px;line-height:14.52px;font-weight:bold;font-style:italic;color:#000;">Мальцев</span>
<span style="left:32.04px;top:340.02px;font-size:11.6px;line-height:13.92px;font-weight:bold;font-style:normal;color:#000;transform:scaleX(0.9786);transform-origin:100% 50%;">11</span>
<span style="left:50.50px;top:339.72px;font-size:12.1px;line-height:14.52px;font-weight:bold;font-style:italic;color:#000;">Михайлов</span>
<span style="left:31.40px;top:355.91px;font-size:11.6px;line-height:13.92px;font-weight:bold;font-style:normal;color:#000;transform:scaleX(0.9300);transform-origin:100% 50%;">12</span>
<span style="left:50.50px;top:355.61px;font-size:12.1px;line-height:14.52px;font-weight:bold;font-style:italic;color:#000;">Никитин</span>
<span style="left:31.40px;top:371.80px;font-size:11.6px;line-height:13.92px;font-weight:bold;font-style:normal;color:#000;transform:scaleX(0.9300);transform-origin:100% 50%;">13</span>
<span style="left:50.50px;top:371.50px;font-size:12.1px;line-height:14.52px;font-weight:bold;font-style:italic;color:#000;">Петрова</span>
<span style="left:31.40px;top:387.69px;font-size:11.6px;line-height:13.92px;font-weight:bold;font-style:normal;color:#000;transform:scaleX(0.9300);transform-origin:100% 50%;">14</span>
<span style="left:50.50px;top:387.39px;font-size:12.1px;line-height:14.52px;font-weight:bold;font-style:italic;color:#000;">Сергеев</span>
<span style="left:31.40px;top:403.58px;font-size:11.6px;line-height:13.92px;font-weight:bold;font-style:normal;color:#000;transform:scaleX(0.9300);transform-origin:100% 50%;">15</span>
<span style="left:50.50px;top:403.28px;font-size:12.1px;line-height:14.52px;font-weight:bold;font-style:italic;color:#000;">Тимофеева</span>
<span style="left:31.40px;top:419.47px;font-size:11.6px;line-height:13.92px;font-weight:bold;font-style:normal;color:#000;transform:scaleX(0.9300);transform-origin:100% 50%;">16</span>
<span style="left:50.50px;top:419.17px;font-size:12.1px;line-height:14.52px;font-weight:bold;font-style:italic;color:#000;">Федоров</span>
<span style="left:31.40px;top:435.36px;font-size:11.6px;line-height:13.92px;font-weight:bold;font-style:normal;color:#000;transform:scaleX(0.9300);transform-origin:100% 50%;">17</span>
<span style="left:50.50px;top:435.06px;font-size:12.1px;line-height:14.52px;font-weight:bold;font-style:italic;color:#000;">Федотова</span>
<span style="left:31.40px;top:451.25px;font-size:11.6px;line-height:13.92px;font-weight:bold;font-style:normal;color:#000;transform:scaleX(0.9300);transform-origin:100% 50%;">18</span>
<span style="left:50.50px;top:450.95px;font-size:12.1px;line-height:14.52px;font-weight:bold;font-style:italic;color:#000;">Якушев</span>
<div style="left:124.80px;top:463.42px;width:5.60px;height:5.60px;background:#fff;"></div>
<div style="left:125.80px;top:464.42px;width:3.80px;height:3.80px;background:#111;"></div>
<div style="left:154.3px;top:196.7px;width:563.2px;height:315.3px;background:#0b3fd4;border-radius:8px 8px 0 0;"></div>
<div style="left:154.3px;top:196.7px;width:563.2px;height:27.5px;border-radius:8px 8px 0 0;background:linear-gradient(#4088f5 0,#1565ee 8%,#0855e4 22%,#0458ea 50%,#0763f5 80%,#0560f2 90%,#0247d6 100%);"></div>
<div style="left:157.30px;top:224.00px;width:557.20px;height:278.00px;background:#ece9d8;"></div>
<div style="left:714.50px;top:224.00px;width:3.00px;height:278.00px;background:#0b34c6;"></div>
<span style="left:161.30px;top:205.83px;font-size:13.2px;line-height:15.84px;font-weight:bold;font-style:normal;color:#0a2a80;transform:scaleX(0.9004);transform-origin:0 50%;">Параметры</span>
<span style="left:160.30px;top:204.83px;font-size:13.2px;line-height:15.84px;font-weight:bold;font-style:normal;color:#fff;transform:scaleX(0.9004);transform-origin:0 50%;">Параметры</span>
<div style="left:671.5px;top:201.5px;width:18.5px;height:19px;border-radius:3px;border:1px solid #fff;box-sizing:border-box;background:linear-gradient(135deg,#7fa4f0,#2f63d8 55%,#2050c4);"></div>
<span style="left:675.91px;top:201.88px;font-size:16px;line-height:19.20px;font-weight:bold;font-style:normal;color:#fff;transform:scaleX(0.8185);transform-origin:50% 50%;">?</span>
<div style="left:693px;top:201.5px;width:18.7px;height:19px;border-radius:3px;border:1px solid #fff;box-sizing:border-box;background:linear-gradient(135deg,#f0906c,#e4501f 50%,#c0380c);"></div>
<svg style="left:696px;top:204.5px" width="13" height="13" viewBox="0 0 13 13"><path d="M1.800 1.800l9.400 9.400M11.200 1.800l-9.400 9.400" stroke="#fff" stroke-width="1.900"/></svg>
<div style="left:164.50px;top:267.00px;width:543.50px;height:235.00px;background:#ece9d8;"></div>
<div style="left:164.50px;top:267.00px;width:543.50px;height:1.00px;background:#fff;"></div>
<div style="left:164.50px;top:267.00px;width:1.00px;height:235.00px;background:#fff;"></div>
<div style="left:707.00px;top:267.00px;width:1.00px;height:235.00px;background:#aca899;"></div>
<div style="left:708.00px;top:267.00px;width:1.00px;height:235.00px;background:#716f64;"></div>
<div style="left:164.00px;top:233.00px;width:1.00px;height:16.50px;background:#faf9f3;"></div>
<div style="left:166.00px;top:231.00px;width:115.50px;height:1.00px;background:#faf9f3;"></div>
<div style="left:165.00px;top:232.00px;width:1.00px;height:1.00px;background:#faf9f3;"></div>
<div style="left:281.50px;top:233.00px;width:1.00px;height:16.50px;background:#aca899;"></div>
<div style="left:282.50px;top:233.00px;width:1.00px;height:16.50px;background:#716f64;"></div>
<div style="left:281.50px;top:232.00px;width:1.00px;height:1.00px;background:#716f64;"></div>
<span style="left:182.20px;top:235.20px;font-size:10.7px;line-height:12.84px;font-weight:normal;font-style:normal;color:#000;transform:scaleX(0.9622);transform-origin:0 50%;">Международные</span>
<div style="left:283.50px;top:233.00px;width:1.00px;height:16.50px;background:#faf9f3;"></div>
<div style="left:285.50px;top:231.00px;width:93.00px;height:1.00px;background:#faf9f3;"></div>
<div style="left:284.50px;top:232.00px;width:1.00px;height:1.00px;background:#faf9f3;"></div>
<div style="left:378.50px;top:233.00px;width:1.00px;height:16.50px;background:#aca899;"></div>
<div style="left:379.50px;top:233.00px;width:1.00px;height:16.50px;background:#716f64;"></div>
<div style="left:378.50px;top:232.00px;width:1.00px;height:1.00px;background:#716f64;"></div>
<span style="left:302.50px;top:235.20px;font-size:10.7px;line-height:12.84px;font-weight:normal;font-style:normal;color:#000;transform:scaleX(0.9420);transform-origin:0 50%;">Сохранение</span>
<div style="left:380.50px;top:233.00px;width:1.00px;height:16.50px;background:#faf9f3;"></div>
<div style="left:382.50px;top:231.00px;width:119.50px;height:1.00px;background:#faf9f3;"></div>
<div style="left:381.50px;top:232.00px;width:1.00px;height:1.00px;background:#faf9f3;"></div>
<div style="left:502.00px;top:233.00px;width:1.00px;height:16.50px;background:#aca899;"></div>
<div style="left:503.00px;top:233.00px;width:1.00px;height:16.50px;background:#716f64;"></div>
<div style="left:502.00px;top:232.00px;width:1.00px;height:1.00px;background:#716f64;"></div>
<span style="left:399.50px;top:235.20px;font-size:10.7px;line-height:12.84px;font-weight:normal;font-style:normal;color:#000;transform:scaleX(0.9527);transform-origin:0 50%;">Проверка ошибок</span>
<div style="left:504.00px;top:233.00px;width:1.00px;height:16.50px;background:#faf9f3;"></div>
<div style="left:506.00px;top:231.00px;width:95.50px;height:1.00px;background:#faf9f3;"></div>
<div style="left:505.00px;top:232.00px;width:1.00px;height:1.00px;background:#faf9f3;"></div>
<div style="left:601.50px;top:233.00px;width:1.00px;height:16.50px;background:#aca899;"></div>
<div style="left:602.50px;top:233.00px;width:1.00px;height:16.50px;background:#716f64;"></div>
<div style="left:601.50px;top:232.00px;width:1.00px;height:1.00px;background:#716f64;"></div>
<span style="left:523.50px;top:235.20px;font-size:10.7px;line-height:12.84px;font-weight:normal;font-style:normal;color:#000;transform:scaleX(0.9173);transform-origin:0 50%;">Орфография</span>
<div style="left:603.50px;top:233.00px;width:1.00px;height:16.50px;background:#faf9f3;"></div>
<div style="left:605.50px;top:231.00px;width:99.50px;height:1.00px;background:#faf9f3;"></div>
<div style="left:604.50px;top:232.00px;width:1.00px;height:1.00px;background:#faf9f3;"></div>
<div style="left:705.00px;top:233.00px;width:1.00px;height:16.50px;background:#aca899;"></div>
<div style="left:706.00px;top:233.00px;width:1.00px;height:16.50px;background:#716f64;"></div>
<div style="left:705.00px;top:232.00px;width:1.00px;height:1.00px;background:#716f64;"></div>
<span style="left:622.70px;top:235.20px;font-size:10.7px;line-height:12.84px;font-weight:normal;font-style:normal;color:#000;transform:scaleX(0.9465);transform-origin:0 50%;">Безопасность</span>
<div style="left:164.00px;top:251.50px;width:1.00px;height:15.50px;background:#faf9f3;"></div>
<div style="left:166.00px;top:249.50px;width:58.00px;height:1.00px;background:#faf9f3;"></div>
<div style="left:165.00px;top:250.50px;width:1.00px;height:1.00px;background:#faf9f3;"></div>
<div style="left:224.00px;top:251.50px;width:1.00px;height:15.50px;background:#aca899;"></div>
<div style="left:225.00px;top:251.50px;width:1.00px;height:15.50px;background:#716f64;"></div>
<div style="left:224.00px;top:250.50px;width:1.00px;height:1.00px;background:#716f64;"></div>
<span style="left:184.70px;top:252.50px;font-size:10.7px;line-height:12.84px;font-weight:normal;font-style:normal;color:#000;transform:scaleX(0.8834);transform-origin:0 50%;">Вид</span>
<div style="left:226.00px;top:251.50px;width:1.00px;height:15.50px;background:#faf9f3;"></div>
<div style="left:228.00px;top:249.50px;width:81.50px;height:1.00px;background:#faf9f3;"></div>
<div style="left:227.00px;top:250.50px;width:1.00px;height:1.00px;background:#faf9f3;"></div>
<div style="left:309.50px;top:251.50px;width:1.00px;height:15.50px;background:#aca899;"></div>
<div style="left:310.50px;top:251.50px;width:1.00px;height:15.50px;background:#716f64;"></div>
<div style="left:309.50px;top:250.50px;width:1.00px;height:1.00px;background:#716f64;"></div>
<span style="left:239.30px;top:252.50px;font-size:10.7px;line-height:12.84px;font-weight:normal;font-style:normal;color:#000;transform:scaleX(0.9204);transform-origin:0 50%;">Вычисления</span>
<div style="left:311.50px;top:251.50px;width:1.00px;height:15.50px;background:#faf9f3;"></div>
<div style="left:313.50px;top:249.50px;width:59.00px;height:1.00px;background:#faf9f3;"></div>
<div style="left:312.50px;top:250.50px;width:1.00px;height:1.00px;background:#faf9f3;"></div>
<div style="left:372.50px;top:251.50px;width:1.00px;height:15.50px;background:#aca899;"></div>
<div style="left:373.50px;top:251.50px;width:1.00px;height:15.50px;background:#716f64;"></div>
<div style="left:372.50px;top:250.50px;width:1.00px;height:1.00px;background:#716f64;"></div>
<span style="left:325.30px;top:252.50px;font-size:10.7px;line-height:12.84px;font-weight:normal;font-style:normal;color:#000;transform:scaleX(0.9324);transform-origin:0 50%;">Правка</span>
<div style="left:374.50px;top:251.50px;width:1.00px;height:15.50px;background:#faf9f3;"></div>
<div style="left:376.50px;top:249.50px;width:58.00px;height:1.00px;background:#faf9f3;"></div>
<div style="left:375.50px;top:250.50px;width:1.00px;height:1.00px;background:#faf9f3;"></div>
<div style="left:434.50px;top:251.50px;width:1.00px;height:15.50px;background:#aca899;"></div>
<div style="left:435.50px;top:251.50px;width:1.00px;height:15.50px;background:#716f64;"></div>
<div style="left:434.50px;top:250.50px;width:1.00px;height:1.00px;background:#716f64;"></div>
<span style="left:387.50px;top:252.50px;font-size:10.7px;line-height:12.84px;font-weight:normal;font-style:normal;color:#000;transform:scaleX(0.9238);transform-origin:0 50%;">Общие</span>
<div style="left:436.50px;top:251.50px;width:1.00px;height:15.50px;background:#faf9f3;"></div>
<div style="left:438.50px;top:249.50px;width:64.00px;height:1.00px;background:#faf9f3;"></div>
<div style="left:437.50px;top:250.50px;width:1.00px;height:1.00px;background:#faf9f3;"></div>
<div style="left:502.50px;top:251.50px;width:1.00px;height:15.50px;background:#aca899;"></div>
<div style="left:503.50px;top:251.50px;width:1.00px;height:15.50px;background:#716f64;"></div>
<div style="left:502.50px;top:250.50px;width:1.00px;height:1.00px;background:#716f64;"></div>
<span style="left:449.00px;top:252.50px;font-size:10.7px;line-height:12.84px;font-weight:normal;font-style:normal;color:#000;transform:scaleX(0.9648);transform-origin:0 50%;">Переход</span>
<div style="left:568.00px;top:251.50px;width:1.00px;height:15.50px;background:#faf9f3;"></div>
<div style="left:570.00px;top:249.50px;width:74.50px;height:1.00px;background:#faf9f3;"></div>
<div style="left:569.00px;top:250.50px;width:1.00px;height:1.00px;background:#faf9f3;"></div>
<div style="left:644.50px;top:251.50px;width:1.00px;height:15.50px;background:#aca899;"></div>
<div style="left:645.50px;top:251.50px;width:1.00px;height:15.50px;background:#716f64;"></div>
<div style="left:644.50px;top:250.50px;width:1.00px;height:1.00px;background:#716f64;"></div>
<span style="left:580.30px;top:252.50px;font-size:10.7px;line-height:12.84px;font-weight:normal;font-style:normal;color:#000;transform:scaleX(0.9291);transform-origin:0 50%;">Диаграмма</span>
<div style="left:646.50px;top:251.50px;width:1.00px;height:15.50px;background:#faf9f3;"></div>
<div style="left:648.50px;top:249.50px;width:56.50px;height:1.00px;background:#faf9f3;"></div>
<div style="left:647.50px;top:250.50px;width:1.00px;height:1.00px;background:#faf9f3;"></div>
<div style="left:705.00px;top:251.50px;width:1.00px;height:15.50px;background:#aca899;"></div>
<div style="left:706.00px;top:251.50px;width:1.00px;height:15.50px;background:#716f64;"></div>
<div style="left:705.00px;top:250.50px;width:1.00px;height:1.00px;background:#716f64;"></div>
<span style="left:663.50px;top:252.50px;font-size:10.7px;line-height:12.84px;font-weight:normal;font-style:normal;color:#000;transform:scaleX(1.0427);transform-origin:0 50%;">Цвет</span>
<div style="left:504.00px;top:247.50px;width:65.00px;height:20.50px;background:#ece9d8;"></div>
<div style="left:504.00px;top:249.50px;width:1.00px;height:18.50px;background:#faf9f3;"></div>
<div style="left:506.00px;top:247.50px;width:61.00px;height:1.00px;background:#faf9f3;"></div>
<div style="left:505.00px;top:248.50px;width:1.00px;height:1.00px;background:#faf9f3;"></div>
<div style="left:567.00px;top:249.50px;width:1.00px;height:18.50px;background:#aca899;"></div>
<div style="left:568.00px;top:249.50px;width:1.00px;height:18.50px;background:#716f64;"></div>
<div style="left:567.00px;top:248.50px;width:1.00px;height:1.00px;background:#716f64;"></div>
<span style="left:519.00px;top:251.90px;font-size:10.7px;line-height:12.84px;font-weight:normal;font-style:normal;color:#000;transform:scaleX(0.9576);transform-origin:0 50%;">Списки</span>
<div style="left:508.5px;top:250.5px;width:55px;height:14px;border:1px dotted #333;box-sizing:border-box;background:none"></div>
<span style="left:170.50px;top:277.00px;font-size:10.7px;line-height:12.84px;font-weight:normal;font-style:normal;color:#000;transform:scaleX(0.9486);transform-origin:0 50%;">С<u>п</u>иски:</span>
<span style="left:393.25px;top:277.00px;font-size:10.7px;line-height:12.84px;font-weight:normal;font-style:normal;color:#000;transform:scaleX(0.9380);transform-origin:0 50%;"><u>Э</u>лементы списка:</span>
<div style="left:172.00px;top:290.00px;width:212.00px;height:147.50px;background:#fff;"></div>
<div style="left:172.00px;top:290.00px;width:212.00px;height:1.00px;background:#7a7a72;"></div>
<div style="left:172.00px;top:290.00px;width:1.00px;height:147.50px;background:#7a7a72;"></div>
<div style="left:173.00px;top:291.00px;width:210.00px;height:1.00px;background:#3a3a36;"></div>
<div style="left:173.00px;top:291.00px;width:1.00px;height:145.50px;background:#3a3a36;"></div>
<div style="left:172.00px;top:436.50px;width:212.00px;height:1.00px;background:#fff;"></div>
<div style="left:383.00px;top:290.00px;width:1.00px;height:147.50px;background:#fff;"></div>
<div style="left:173.00px;top:435.50px;width:210.00px;height:1.00px;background:#e4e2d4;"></div>
<div style="left:382.00px;top:291.00px;width:1.00px;height:145.50px;background:#e4e2d4;"></div>
<div style="left:367.50px;top:292.00px;width:14.50px;height:143.50px;background:#fbfaf7;"></div>
<div style="left:368.00px;top:291.50px;width:15.50px;height:15.50px;background:#efede2;box-sizing:border-box;border:1px solid #f8f7f2;border-right:1.3px solid #4a4942;border-bottom:1.3px solid #4a4942;"></div>
<svg style="left:371.75px;top:296.75px" width="8" height="5" viewBox="0 0 8 5"><path d="M0.500 4.500h7l-3.500-3.500z" fill="#b8b6a6"/></svg>
<div style="left:368.00px;top:421.00px;width:15.50px;height:15.50px;background:#efede2;box-sizing:border-box;border:1px solid #f8f7f2;border-right:1.3px solid #4a4942;border-bottom:1.3px solid #4a4942;"></div>
<svg style="left:371.75px;top:426.25px" width="8" height="5" viewBox="0 0 8 5"><path d="M0.500 0.500h7l-3.500 3.500z" fill="#b8b6a6"/></svg>
<div style="left:174.00px;top:291.60px;width:193.50px;height:12.20px;background:#2c62d0;"></div>
<div style="left:174px;top:291px;width:193px;height:70px;overflow:hidden;background:none">
<span style="left:0.25px;top:1.30px;font-size:10.7px;line-height:12.84px;font-weight:normal;font-style:normal;color:#fff;transform:scaleX(0.8561);transform-origin:0 50%;white-space:nowrap;">НОВЫЙ СПИСОК</span>
<span style="left:0.25px;top:13.72px;font-size:10.7px;line-height:12.84px;font-weight:normal;font-style:normal;color:#000;transform:scaleX(0.9894);transform-origin:0 50%;white-space:nowrap;">Пн, Вт, Ср, Чт, Пт, Сб, Вс</span>
<span style="left:0.25px;top:26.14px;font-size:10.7px;line-height:12.84px;font-weight:normal;font-style:normal;color:#000;transform:scaleX(0.9930);transform-origin:0 50%;white-space:nowrap;">Понедельник, Вторник, Среда, Четверг,</span>
<span style="left:0.25px;top:38.56px;font-size:10.7px;line-height:12.84px;font-weight:normal;font-style:normal;color:#000;transform:scaleX(0.9857);transform-origin:0 50%;white-space:nowrap;">янв, фев, мар, апр, май, июн, июл, авг,</span>
<span style="left:0.25px;top:50.98px;font-size:10.7px;line-height:12.84px;font-weight:normal;font-style:normal;color:#000;transform:scaleX(0.9648);transform-origin:0 50%;white-space:nowrap;">Январь, Февраль, Март, Апрель, Май, И</span>
</div>
<div style="left:393.75px;top:290.00px;width:214.25px;height:150.30px;background:#fff;"></div>
<div style="left:393.75px;top:290.00px;width:214.25px;height:1.00px;background:#7a7a72;"></div>
<div style="left:393.75px;top:290.00px;width:1.00px;height:150.30px;background:#7a7a72;"></div>
<div style="left:394.75px;top:291.00px;width:212.25px;height:1.00px;background:#3a3a36;"></div>
<div style="left:394.75px;top:291.00px;width:1.00px;height:148.30px;background:#3a3a36;"></div>
<div style="left:393.75px;top:439.30px;width:214.25px;height:1.00px;background:#fff;"></div>
<div style="left:607.00px;top:290.00px;width:1.00px;height:150.30px;background:#fff;"></div>
<div style="left:394.75px;top:438.30px;width:212.25px;height:1.00px;background:#e4e2d4;"></div>
<div style="left:606.00px;top:291.00px;width:1.00px;height:148.30px;background:#e4e2d4;"></div>
<div style="left:592.00px;top:292.00px;width:14.00px;height:146.30px;background:linear-gradient(90deg,#fefefd,#f1f0e9);"></div>
<div style="left:592.00px;top:292.50px;width:13.50px;height:14.50px;background:#f4f3ed;box-sizing:border-box;border:1px solid #e9e7de;border-radius:2px;"></div>
<svg style="left:594.25px;top:296.55px" width="9" height="6.5" viewBox="0 0 9 6.5"><path d="M1 5l3.500-3.500l3.500 3.500" fill="none" stroke="#d2d0c4" stroke-width="1.800"/></svg>
<div style="left:592.00px;top:423.00px;width:13.50px;height:14.50px;background:#f4f3ed;box-sizing:border-box;border:1px solid #e9e7de;border-radius:2px;"></div>
<svg style="left:594.25px;top:427.05px" width="9" height="6.5" viewBox="0 0 9 6.5"><path d="M1 1.500l3.500 3.500l3.500-3.500" fill="none" stroke="#d2d0c4" stroke-width="1.800"/></svg>
<div style="left:616.50px;top:289.00px;width:83.50px;height:21.50px;background:#ece9d8;box-sizing:border-box;border:1px solid #fff;border-right-color:#716f64;border-bottom-color:#716f64;"></div>
<div style="left:617.50px;top:308.50px;width:81.50px;height:1.00px;background:#aca899;"></div>
<div style="left:698.00px;top:290.00px;width:1.00px;height:19.50px;background:#aca899;"></div>
<span style="left:634.00px;top:293.90px;font-size:10.7px;line-height:12.84px;font-weight:normal;font-style:normal;color:#000;transform:scaleX(0.9728);transform-origin:0 50%;"><u>Д</u>обавить</span>
<div style="left:616.50px;top:317.50px;width:83.50px;height:21.00px;background:#ece9d8;box-sizing:border-box;border:1px solid #fff;border-right-color:#716f64;border-bottom-color:#716f64;"></div>
<div style="left:617.50px;top:336.50px;width:81.50px;height:1.00px;background:#aca899;"></div>
<div style="left:698.00px;top:318.50px;width:1.00px;height:19.00px;background:#aca899;"></div>
<span style="left:637.00px;top:323.00px;font-size:10.7px;line-height:12.84px;font-weight:normal;font-style:normal;color:#fff;transform:scaleX(1.0110);transform-origin:0 50%;">Удалить</span>
<span style="left:636.00px;top:322.00px;font-size:10.7px;line-height:12.84px;font-weight:normal;font-style:normal;color:#aca899;transform:scaleX(1.0110);transform-origin:0 50%;">Удалить</span>
<div style="left:616.00px;top:463.00px;width:84.00px;height:21.50px;background:#ece9d8;box-sizing:border-box;border:1px solid #fff;border-right-color:#716f64;border-bottom-color:#716f64;"></div>
<div style="left:617.00px;top:482.50px;width:82.00px;height:1.00px;background:#aca899;"></div>
<div style="left:698.00px;top:464.00px;width:1.00px;height:19.50px;background:#aca899;"></div>
<span style="left:639.75px;top:467.70px;font-size:10.7px;line-height:12.84px;font-weight:normal;font-style:normal;color:#000;transform:scaleX(0.9022);transform-origin:0 50%;"><u>И</u>мпорт</span>
<span style="left:188.00px;top:449.45px;font-size:10.7px;line-height:12.84px;font-weight:normal;font-style:normal;color:#000;transform:scaleX(0.9507);transform-origin:0 50%;">Для разделения элементов списка нажмите клавишу Enter.</span>
<span style="left:188.00px;top:464.30px;font-size:10.7px;line-height:12.84px;font-weight:normal;font-style:normal;color:#000;transform:scaleX(0.9467);transform-origin:0 50%;">И<u>м</u>порт списка из ячеек:</span>
<div style="left:393.75px;top:464.50px;width:212.75px;height:16.00px;background:#fff;"></div>
<div style="left:393.75px;top:464.50px;width:212.75px;height:1.00px;background:#7a7a72;"></div>
<div style="left:393.75px;top:464.50px;width:1.00px;height:16.00px;background:#7a7a72;"></div>
<div style="left:394.75px;top:465.50px;width:210.75px;height:1.00px;background:#3a3a36;"></div>
<div style="left:394.75px;top:465.50px;width:1.00px;height:14.00px;background:#3a3a36;"></div>
<div style="left:393.75px;top:479.50px;width:212.75px;height:1.00px;background:#fff;"></div>
<div style="left:605.50px;top:464.50px;width:1.00px;height:16.00px;background:#fff;"></div>
<div style="left:394.75px;top:478.50px;width:210.75px;height:1.00px;background:#e4e2d4;"></div>
<div style="left:604.50px;top:465.50px;width:1.00px;height:14.00px;background:#e4e2d4;"></div>
<span style="left:395.70px;top:467.50px;font-size:10.7px;line-height:12.84px;font-weight:normal;font-style:normal;color:#000;transform:scaleX(0.9253);transform-origin:0 50%;">$B$4:$B$21</span>
<svg style="left:591px;top:466.5px" width="14" height="12.5" viewBox="0 0 14 12.5"><rect x="0" y="0" width="14" height="12.500" fill="#ece9d8"/><rect x="1" y="1" width="11" height="9" fill="#fff" stroke="#555" stroke-width="0.800"/><rect x="1" y="1" width="11" height="2.500" fill="#2a3a9a"/><path d="M4 4.500l5 5" stroke="#d02020" stroke-width="2"/><rect x="9" y="8" width="4" height="3.500" fill="#333"/></svg>
</div></body></html>
